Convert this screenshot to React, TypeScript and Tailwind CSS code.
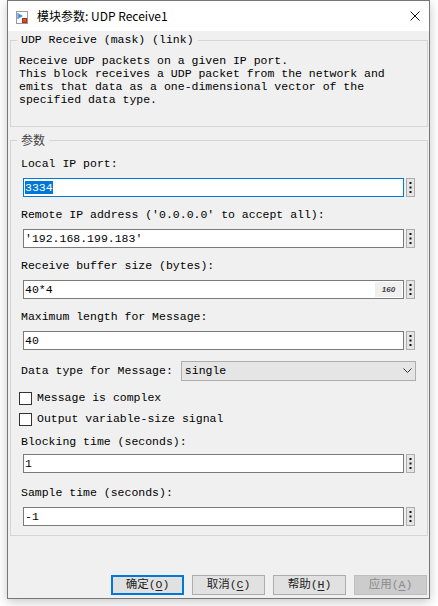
import React from "react";

const mono = "font-['Liberation_Mono','Noto_Sans_CJK_SC',monospace] text-[11.5px] text-black";

const BlockIcon = () => (
  <svg width="12" height="13" viewBox="0 0 12 13">
    <rect x="0.5" y="0.5" width="11" height="12" fill="#fff" stroke="#9a9a9a" />
    <path d="M2 2 L2 8" stroke="#2a6fc9" strokeWidth="1" />
    <path d="M2.5 2.5 L7 5 L2.5 7.5 Z" fill="#3b8ee0" />
    <rect x="6.5" y="7.5" width="4" height="4" fill="#e0502a" stroke="#a3301a" strokeWidth="1" />
  </svg>
);

const MoreButton = () => (
  <div className="ml-[2px] w-[9px] h-[19px] border border-[#adadad] bg-[#e5e5e5] flex items-center justify-center">
    <svg width="3" height="11" viewBox="0 0 3 11">
      <rect x="0.5" y="0" width="2" height="2" fill="#111" />
      <rect x="0.5" y="4.5" width="2" height="2" fill="#111" />
      <rect x="0.5" y="9" width="2" height="2" fill="#111" />
    </svg>
  </div>
);

type FieldProps = {
  label: string;
  value: React.ReactNode;
  labelMt: string;
  inputMt?: string;
  focused?: boolean;
  badge?: string;
};

const Field: React.FC<FieldProps> = ({ label, value, labelMt, inputMt = "mt-[7px]", focused, badge }) => (
  <>
    <div className={`${labelMt} ml-[4px] h-[14px] leading-[14px] ${mono}`}>{label}</div>
    <div className={`${inputMt} ml-[6px] flex`}>
      <div
        className={`w-[381px] h-[19px] bg-white border flex items-center pl-[1px] ${
          focused ? "border-[#0078d7]" : "border-[#7a7a7a]"
        }`}
      >
        <div className={`flex-1 leading-[15px] ${mono}`}>{value}</div>
        {badge && (
          <div className="mr-[1px] w-[27px] h-[15px] bg-[#f0f0f0] flex items-center justify-center font-['Liberation_Sans',sans-serif] text-[8px] italic font-bold text-[#444]">
            {badge}
          </div>
        )}
      </div>
      <MoreButton />
    </div>
  </>
);

const Checkbox: React.FC<{ label: string; mt: string }> = ({ label, mt }) => (
  <div className={`${mt} ml-[2px] h-[14px] flex items-center`}>
    <div className="w-[13px] h-[13px] border border-[#333] bg-white" />
    <span className={`ml-[5px] leading-[14px] ${mono}`}>{label}</span>
  </div>
);

const DialogButton: React.FC<{ text: string; letter: string; primary?: boolean; disabled?: boolean }> = ({
  text,
  letter,
  primary,
  disabled,
}) => (
  <div
    className={`w-[73px] h-[20px] flex items-center justify-center ${
      primary
        ? "border-2 border-[#0078d7] bg-[#e1e1e1]"
        : disabled
        ? "border border-[#bfbfbf] bg-[#cccccc]"
        : "border border-[#adadad] bg-[#e1e1e1]"
    }`}
  >
    <span
      className={`font-['Liberation_Mono','Noto_Sans_CJK_SC',monospace] text-[11.5px] leading-[14px] ${
        disabled ? "text-[#8a8a8a]" : "text-[#222]"
      }`}
    >
      {text}(<span className="underline underline-offset-2">{letter}</span>)
    </span>
  </div>
);

export default function App() {
  return (
    <div className="w-[438px] h-[606px] bg-white overflow-hidden">
      <div className="ml-[7px] w-[423px] h-[599px] border border-[#777] bg-[#f0f0f0] flex flex-col shadow-[0_3px_10px_rgba(0,0,0,0.22)]">
        {/* title bar */}
        <div className="h-[30px] bg-white flex items-center">
          <div className="ml-[8px] mt-[2px]">
            <BlockIcon />
          </div>
          <span className="ml-[9px] font-['Noto_Sans_CJK_SC',sans-serif] text-[12px] text-black leading-[16px]">
            模块参数: UDP Receive1
          </span>
          <svg className="ml-auto mr-[9px]" width="10" height="10" viewBox="0 0 10 10">
            <path d="M0.5 0.5 L9.5 9.5 M9.5 0.5 L0.5 9.5" stroke="#111" strokeWidth="1" />
          </svg>
        </div>

        {/* description group */}
        <fieldset className="mt-[2px] ml-[2px] w-[418px] border border-[#d5d5d5] px-[6px] pb-0">
          <legend className={`px-[4px] h-[14px] leading-[14px] ${mono}`}>UDP Receive (mask) (link)</legend>
          <div className={`mt-[7px] mb-[20px] ml-[2px] leading-[13px] whitespace-pre ${mono}`}>
            {"Receive UDP packets on a given IP port.\nThis block receives a UDP packet from the network and\nemits that data as a one-dimensional vector of the\nspecified data type."}
          </div>
        </fieldset>

        {/* parameter group */}
        <fieldset className="mt-[6px] ml-[2px] w-[418px] border border-[#d5d5d5] px-[6px] pb-0">
          <legend className="px-[4px] h-[14px] leading-[14px] font-['Noto_Sans_CJK_SC',sans-serif] text-[12px] text-[#444]">
            参数
          </legend>
          <Field
            label="Local IP port:"
            labelMt="mt-[10px]"
            focused
            value={<span className="bg-[#0078d7] text-white">3334</span>}
          />
          <Field label="Remote IP address ('0.0.0.0' to accept all):" labelMt="mt-[11px]" value="'192.168.199.183'" />
          <Field label="Receive buffer size (bytes):" labelMt="mt-[11px]" value="40*4" badge="160" />
          <Field label="Maximum length for Message:" labelMt="mt-[11px]" value="40" />

          <div className="mt-[11px] ml-[4px] flex items-center">
            <span className={`leading-[14px] ${mono}`}>Data type for Message:</span>
            <div className="ml-[8px] w-[235px] h-[20px] border border-[#adadad] bg-[#e5e5e5] flex items-center pl-[3px] pr-[3px]">
              <span className={`flex-1 leading-[14px] ${mono}`}>single</span>
              <svg width="9" height="6" viewBox="0 0 9 6">
                <path d="M0.5 0.5 L4.5 4.5 L8.5 0.5" fill="none" stroke="#333" strokeWidth="1" />
              </svg>
            </div>
          </div>

          <Checkbox label="Message is complex" mt="mt-[10px]" />
          <Checkbox label="Output variable-size signal" mt="mt-[7px]" />

          <Field label="Blocking time (seconds):" labelMt="mt-[9px]" inputMt="mt-[5px]" value="1" />
          <Field label="Sample time (seconds):" labelMt="mt-[13px]" value="-1" />
          <div className="h-[9px]" />
        </fieldset>

        <div className="flex-1" />

        {/* buttons */}
        <div className="mb-[3px] mr-[2px] flex justify-end gap-[8px]">
          <DialogButton text="确定" letter="O" primary />
          <DialogButton text="取消" letter="C" />
          <DialogButton text="帮助" letter="H" />
          <DialogButton text="应用" letter="A" disabled />
        </div>
      </div>
    </div>
  );
}
